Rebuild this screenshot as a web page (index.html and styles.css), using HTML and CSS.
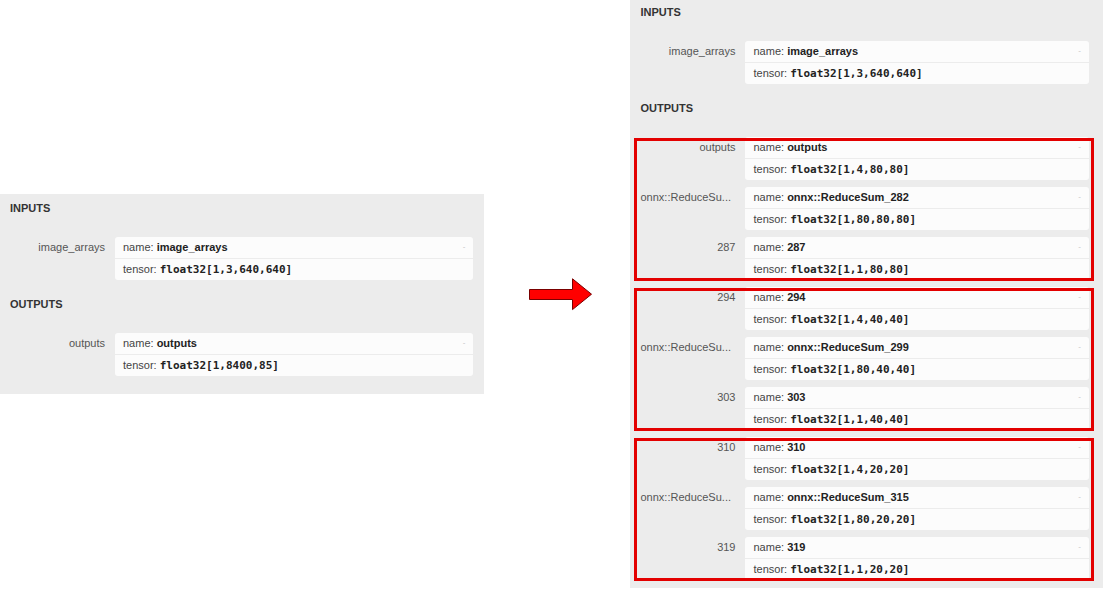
FILE: index.html
```html
<!DOCTYPE html>
<html lang="en">
<head>
<meta charset="utf-8">
<title>Model properties comparison</title>
<link rel="stylesheet" href="styles.css">
</head>
<body>
<div class="page">
  <section class="panel panel--left">
    <div class="heading">INPUTS</div>
    <div class="list">
      <div class="row">
        <div class="label">image_arrays</div>
        <div class="card">
          <div class="field field--name">name: <b>image_arrays</b><span class="toggle">-</span></div>
          <div class="field">tensor: <code>float32[1,3,640,640]</code></div>
        </div>
      </div>
    </div>
    <div class="heading">OUTPUTS</div>
    <div class="list list--last">
      <div class="row">
        <div class="label">outputs</div>
        <div class="card">
          <div class="field field--name">name: <b>outputs</b><span class="toggle">-</span></div>
          <div class="field">tensor: <code>float32[1,8400,85]</code></div>
        </div>
      </div>
    </div>
  </section>

  <svg class="arrow" width="64" height="33" viewBox="0 0 64 33" aria-hidden="true">
    <path d="M0.5 11.5 H43.5 V0.8 L62.5 16.2 L43.5 31.6 V21.5 H0.5 Z" fill="#ff0000" stroke="#7a0000" stroke-width="1"/>
  </svg>

  <section class="panel panel--right">
    <div class="heading">INPUTS</div>
    <div class="list">
      <div class="row">
        <div class="label">image_arrays</div>
        <div class="card">
          <div class="field field--name">name: <b>image_arrays</b><span class="toggle">-</span></div>
          <div class="field">tensor: <code>float32[1,3,640,640]</code></div>
        </div>
      </div>
    </div>
    <div class="heading">OUTPUTS</div>
    <div class="list list--last">
      <div class="group">
        <div class="row">
          <div class="label">outputs</div>
          <div class="card">
            <div class="field field--name">name: <b>outputs</b><span class="toggle">-</span></div>
            <div class="field">tensor: <code>float32[1,4,80,80]</code></div>
          </div>
        </div>
        <div class="row">
          <div class="label label--clip" title="onnx::ReduceSum_282">onnx::ReduceSu...</div>
          <div class="card">
            <div class="field field--name">name: <b>onnx::ReduceSum_282</b><span class="toggle">-</span></div>
            <div class="field">tensor: <code>float32[1,80,80,80]</code></div>
          </div>
        </div>
        <div class="row">
          <div class="label">287</div>
          <div class="card">
            <div class="field field--name">name: <b>287</b><span class="toggle">-</span></div>
            <div class="field">tensor: <code>float32[1,1,80,80]</code></div>
          </div>
        </div>
      </div>
      <div class="group">
        <div class="row">
          <div class="label">294</div>
          <div class="card">
            <div class="field field--name">name: <b>294</b><span class="toggle">-</span></div>
            <div class="field">tensor: <code>float32[1,4,40,40]</code></div>
          </div>
        </div>
        <div class="row">
          <div class="label label--clip" title="onnx::ReduceSum_299">onnx::ReduceSu...</div>
          <div class="card">
            <div class="field field--name">name: <b>onnx::ReduceSum_299</b><span class="toggle">-</span></div>
            <div class="field">tensor: <code>float32[1,80,40,40]</code></div>
          </div>
        </div>
        <div class="row">
          <div class="label">303</div>
          <div class="card">
            <div class="field field--name">name: <b>303</b><span class="toggle">-</span></div>
            <div class="field">tensor: <code>float32[1,1,40,40]</code></div>
          </div>
        </div>
      </div>
      <div class="group">
        <div class="row">
          <div class="label">310</div>
          <div class="card">
            <div class="field field--name">name: <b>310</b><span class="toggle">-</span></div>
            <div class="field">tensor: <code>float32[1,4,20,20]</code></div>
          </div>
        </div>
        <div class="row">
          <div class="label label--clip" title="onnx::ReduceSum_315">onnx::ReduceSu...</div>
          <div class="card">
            <div class="field field--name">name: <b>onnx::ReduceSum_315</b><span class="toggle">-</span></div>
            <div class="field">tensor: <code>float32[1,80,20,20]</code></div>
          </div>
        </div>
        <div class="row">
          <div class="label">319</div>
          <div class="card">
            <div class="field field--name">name: <b>319</b><span class="toggle">-</span></div>
            <div class="field">tensor: <code>float32[1,1,20,20]</code></div>
          </div>
        </div>
      </div>
    </div>
  </section>
</div>
</body>
</html>
```

FILE: styles.css
```css
html, body {
  margin: 0;
  padding: 0;
  background: #ffffff;
}

body {
  font-family: "Liberation Sans", Arial, sans-serif;
  font-size: 11px;
  color: #333333;
}

.page {
  display: flex;
  align-items: flex-start;
  width: 1103px;
  height: 590px;
  overflow: hidden;
}

.panel {
  background: #ececec;
  padding: 6px 11px 18px 10px;
  box-sizing: border-box;
}

.panel--left {
  width: 485px;
  margin-top: 194px;
}

.panel--right {
  width: 473px;
  margin-left: 37px;
  padding: 4px 14px 8px 10px;
}

.arrow {
  display: block;
  margin-left: 45px;
  margin-top: 278px;
  flex: none;
}

.heading {
  font-weight: bold;
  font-size: 11px;
  line-height: 16px;
  color: #333333;
  margin-bottom: 21px;
}

.list {
  display: flex;
  flex-direction: column;
  gap: 7px;
  margin-bottom: 16px;
}

.list--last {
  margin-bottom: 0;
}

.group {
  position: relative;
  display: flex;
  flex-direction: column;
  gap: 7px;
}

.group::after {
  content: "";
  position: absolute;
  top: 1px;
  bottom: -1px;
  left: -6px;
  right: -5px;
  border: 3px solid #e30000;
  pointer-events: none;
}

.row {
  display: flex;
  gap: 10px;
}

.label {
  flex: 0 0 95px;
  text-align: right;
  white-space: nowrap;
  line-height: 21px;
  color: #555555;
}

.label--clip {
  text-align: left;
  overflow: hidden;
}

.card {
  flex: 1;
  min-width: 0;
  background: #fcfcfc;
  border-radius: 3px;
}

.field {
  position: relative;
  height: 21px;
  line-height: 21px;
  padding-left: 8px;
  color: #444444;
}

.field--name {
  border-bottom: 1px solid #ececec;
}

.field b {
  font-weight: bold;
  color: #222222;
}

.field code {
  font-family: "DejaVu Sans Mono", "Liberation Mono", monospace;
  font-weight: bold;
  font-size: 11px;
  color: #222222;
}

.toggle {
  position: absolute;
  right: 8px;
  top: 0;
  font-size: 8px;
  line-height: 19px;
  color: #c4c4c4;
}
```
